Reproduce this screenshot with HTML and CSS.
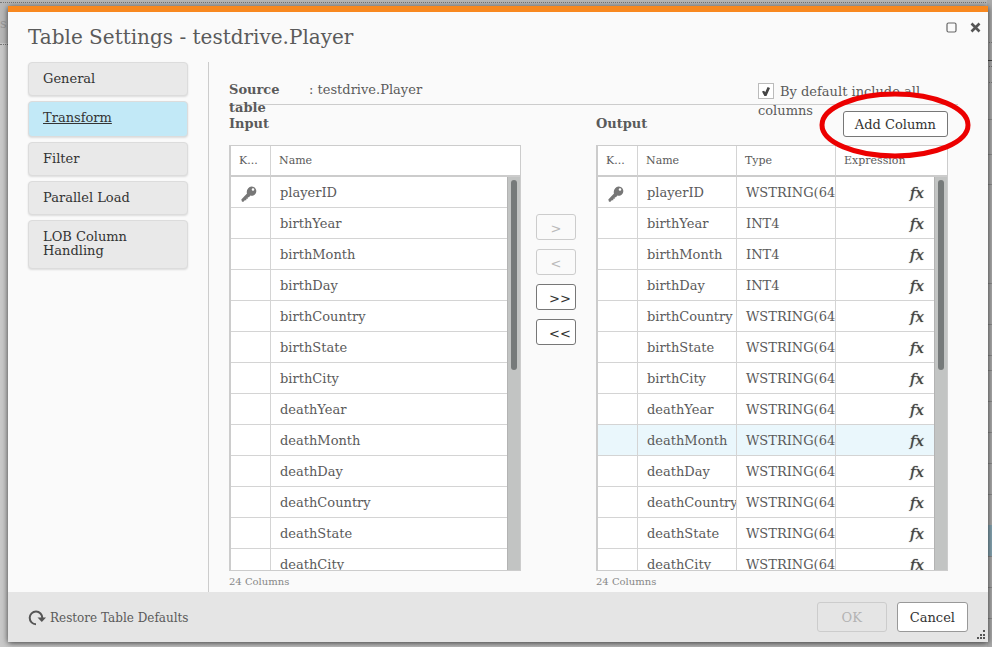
FILE: index.html
```
<!DOCTYPE html>
<html lang="en">
<head>
<meta charset="utf-8">
<title>Table Settings - testdrive.Player</title>
<link rel="stylesheet" href="styles.css">
</head>
<body>
<svg width="0" height="0" class="defs" aria-hidden="true">
  <symbol id="key" viewBox="0 0 16 16">
    <path fill="#777" fill-rule="evenodd" d="M10.500 0.500a4.700 4.700 0 0 1 3.400 8c-1.300 1.300-3 1.600-4.500 1.100L8 11.300H6.800v1.500H5.300V14.200H3.800l-1.300 1.500H1L0.300 13.500 6 7.500C5.400 6 5.800 4 7.200 2.300A4.600 4.600 0 0 1 10.500 0.500zM12 2.200a1.300 1.300 0 1 0 .01 2.600a1.300 1.300 0 0 0-.01-2.600z"/>
  </symbol>
</svg>
<div class="backdrop" aria-hidden="true">
  <span class="backdrop-text">s</span>
  <svg class="backdrop-edge" width="5" height="647">
    <g stroke="#777" stroke-dasharray="1 1"><path d="M0 42.500h5M0 66.500h5M0 82.500h5"/></g>
    <g stroke="#444"><path d="M0 60.500h5"/></g>
    <g stroke="#8c8c8c"><path d="M0 119.500h5M0 154.500h5M0 184.500h5M0 283.500h5M0 324.500h5M0 355.500h5M0 370.500h5M0 401.500h5M0 432.500h5M0 463.500h5M0 494.500h5M0 556.500h5M0 587.500h5M0 618.500h5"/></g>
    <path fill="#86a5b2" d="M0 525h5v31H0z"/>
  </svg>
</div>
<div class="dialog" role="dialog" aria-labelledby="title">
  <header class="dialog-head">
    <h1 id="title">Table Settings - testdrive.Player</h1>
    <div class="window-tools">
      <button type="button" aria-label="Maximize"><svg width="11" height="11"><rect x="1" y="1" width="9" height="9" rx="1.500" fill="none" stroke="#666" stroke-width="1.200"/></svg></button>
      <button type="button" aria-label="Close"><svg width="11" height="11"><path d="M1.500 1.500l8 8M9.500 1.500l-8 8" stroke="#555" stroke-width="2.600"/></svg></button>
    </div>
  </header>
  <div class="dialog-body">
    <nav class="tabs">
      <a href="#general">General</a>
      <a href="#transform" class="active">Transform</a>
      <a href="#filter">Filter</a>
      <a href="#parallel">Parallel Load</a>
      <a href="#lob">LOB Column Handling</a>
    </nav>
    <main class="content">
      <div class="source">
        <strong class="source-label">Source table</strong>
        <span class="source-value">: testdrive.Player</span>
        <label class="include" for="include"><input type="checkbox" id="include" checked>By default include all columns</label>
      </div>
      <div class="panes">
        <section class="pane pane-input">
          <div class="pane-head"><h2>Input</h2></div>
          <div class="grid">
            <table>
              <colgroup><col class="col-key"><col></colgroup>
              <thead><tr><th>K...</th><th>Name</th></tr></thead>
              <tbody id="input-rows"></tbody>
            </table>
            <div class="scrollbar"><div class="thumb"></div></div>
          </div>
          <p class="count">24 Columns</p>
        </section>
        <div class="movers">
          <button type="button" disabled>&gt;</button>
          <button type="button" disabled>&lt;</button>
          <button type="button">&gt;&gt;</button>
          <button type="button">&lt;&lt;</button>
        </div>
        <section class="pane pane-output">
          <div class="pane-head">
            <h2>Output</h2>
            <div class="add">
              <button type="button" class="button">Add Column</button>
              <svg class="ring" width="152" height="68" viewBox="0 0 152 68" aria-hidden="true"><ellipse cx="76" cy="34" rx="73" ry="31" fill="none" stroke="#ec0000" stroke-width="5"/></svg>
            </div>
          </div>
          <div class="grid">
            <table>
              <colgroup><col class="col-key"><col class="col-mid"><col class="col-mid"><col></colgroup>
              <thead><tr><th>K...</th><th>Name</th><th>Type</th><th>Expression</th></tr></thead>
              <tbody id="output-rows"></tbody>
            </table>
            <div class="scrollbar"><div class="thumb"></div></div>
          </div>
          <p class="count">24 Columns</p>
        </section>
      </div>
    </main>
  </div>
  <footer class="dialog-foot">
    <button type="button" class="restore">
      <svg width="18" height="16" viewBox="0 0 18 16" aria-hidden="true"><path d="M8 14.200A6.300 6.300 0 1 1 14.300 8" fill="none" stroke="#555" stroke-width="2"/><path d="M9.500 7.500h8.500l-4.200 4.500z" fill="#555"/></svg>
      Restore Table Defaults
    </button>
    <button type="button" class="button ok" disabled>OK</button>
    <button type="button" class="button cancel">Cancel</button>
    <svg class="grip" width="10" height="10" aria-hidden="true"><path fill="#555" d="M7 0h2v2H7zM4 4h2v2H4zM7 4h2v2H7zM1 7h2v2H1zM4 7h2v2H4zM7 7h2v2H7z"/></svg>
  </footer>
</div>
<script src="rows.js"></script>
</body>
</html>
```
FILE: rows.js
```
const text = "WSTRING(64)";
const columns = [
  ["playerID", text], ["birthYear", "INT4"], ["birthMonth", "INT4"], ["birthDay", "INT4"],
  ["birthCountry", text], ["birthState", text], ["birthCity", text], ["deathYear", text],
  ["deathMonth", text], ["deathDay", text], ["deathCountry", text], ["deathState", text],
  ["deathCity", text]
];
const key = '<svg class="key" width="16" height="16" role="img" aria-label="Key"><use href="#key"/></svg>';
const keyCell = (i) => `<td class="key-cell">${i === 0 ? key : ""}</td>`;

document.getElementById("input-rows").innerHTML = columns
  .map(([name], i) => `<tr>${keyCell(i)}<td>${name}</td></tr>`).join("");

document.getElementById("output-rows").innerHTML = columns
  .map(([name, type], i) => `<tr${name === "deathMonth" ? ' class="hover"' : ""}>${keyCell(i)}<td>${name}</td><td>${type}</td><td class="fx"><button type="button">fx</button></td></tr>`).join("");
```
FILE: styles.css
```
* { box-sizing: border-box; }

body {
  margin: 0;
  height: 100vh;
  padding: 6px 4px 5px 8px;
  overflow: hidden;
  background: linear-gradient(90deg, #c9c9c9, #b2b2b2);
  color: #5a5a5a;
  font: 13px/18px "DejaVu Serif", serif;
}

button { font: inherit; color: inherit; cursor: pointer; }
button:disabled { cursor: default; }
h1, h2, p { margin: 0; font-weight: normal; }

.defs { position: absolute; }

.backdrop {
  position: absolute;
  inset: 0;
  border-top: 43px solid #b8b8b8;
}
.backdrop::before {
  content: "";
  position: absolute;
  inset: -41px 0 auto;
  height: 41px;
  border: 1px dotted #777;
  border-width: 1px 0;
}
.backdrop-text { position: absolute; top: -28px; left: 0; color: #999; }
.backdrop-edge { position: absolute; top: -43px; right: 0; background: #ababab; }

.dialog {
  position: relative;
  display: flex;
  flex-direction: column;
  height: 100%;
  border-top: 6px solid #f8881f;
  background: #fafafa;
  box-shadow: 0 1px 6px rgba(0, 0, 0, 0.7);
}

.dialog-head {
  display: flex;
  justify-content: space-between;
  flex: 0 0 50px;
  padding: 10px 7px 0 20px;
}
h1 { font-size: 20px; line-height: 30px; }
.window-tools { display: flex; gap: 13px; height: 11px; }
.window-tools button { display: flex; padding: 0; border: 0; background: none; }

.dialog-body { display: flex; flex: 1; min-height: 0; }

.tabs {
  display: flex;
  flex-direction: column;
  gap: 5px;
  flex: 0 0 201px;
  padding: 0 20px;
  border-right: 1px solid #ccc;
}
.tabs a {
  padding: 9px 32px 9px 14px;
  border: 1px solid #dcdcdc;
  border-radius: 4px;
  background: #e9e9e9;
  box-shadow: 0 1px 2px rgba(0, 0, 0, 0.12);
  color: #333;
  line-height: 14px;
  text-decoration: none;
}
.tabs .active { padding-bottom: 11px; background: #c2e9f7; text-decoration: underline; }
.tabs a:last-child { padding-bottom: 10px; }

.content {
  display: flex;
  flex-direction: column;
  flex: 1;
  min-width: 0;
  padding: 0 30px 0 20px;
}

.source {
  display: flex;
  flex: 0 0 43px;
  height: 43px;
  padding-top: 19px;
  border-bottom: 1px solid #ccc;
}
.source-label { flex: 0 0 80px; padding-right: 20px; }
.source-value { flex: 1; }
.include { flex: 0 0 200px; padding-top: 1px; line-height: 19px; }
.include input {
  appearance: none;
  width: 16px;
  height: 16px;
  margin: 0 6px 0 0;
  border: 1px solid #bbb;
  background: #fff;
  vertical-align: -3px;
}
.include input:checked::before {
  content: "";
  display: block;
  width: 8px;
  height: 9px;
  margin: 3px;
  background: #444;
  clip-path: polygon(0 50%, 26% 42%, 40% 58%, 70% 0, 100% 10%, 56% 100%, 30% 100%);
}

.panes { display: flex; flex: 1; min-height: 0; padding-right: 10px; }
.pane { display: flex; flex-direction: column; min-width: 0; }
.pane-input { flex: 292 1 0; }
.pane-output { flex: 352 1 0; }
.pane-head { display: flex; justify-content: space-between; flex: 0 0 40px; padding-top: 6px; }
h2 { font-size: 13px; font-weight: bold; line-height: 26px; }

.add { position: relative; height: 26px; }
.ring { position: absolute; top: -20px; left: -24px; z-index: 2; pointer-events: none; }

.button {
  height: 30px;
  padding: 2px 12px 0;
  border: 1px solid #999;
  border-radius: 3px;
  background: #fff;
  color: #333;
}
.add .button { display: block; height: 26px; padding: 2px 11px 0; border-color: #777; }

.grid {
  position: relative;
  flex: 1;
  min-height: 0;
  overflow: hidden;
  border: 1px solid #ccc;
  border-left-width: 2px;
  background: #fff;
}
table { width: 100%; border-collapse: separate; border-spacing: 0; table-layout: fixed; }
.col-key { width: 40px; }
.col-mid { width: 99px; }
th, td {
  overflow: hidden;
  border-right: 1px solid #d4d4d4;
  text-align: left;
  white-space: nowrap;
}
th:last-child, td:last-child { border-right: 0; }
th {
  height: 31px;
  padding: 0 8px;
  border-bottom: 2px solid #ccc;
  font-size: 11px;
  font-weight: normal;
}
td { height: 31px; padding: 2px 0 0 9px; border-bottom: 1px solid #d4d4d4; }
.key-cell { padding: 0 0 0 10px; }
.key { display: block; margin-top: 4px; }
.hover td { background: #eaf7fc; }
.fx { padding-right: 23px; text-align: right; }
.fx button {
  padding: 0;
  border: 0;
  background: none;
  color: #444;
  font-size: 15px;
  font-style: italic;
  text-shadow: 0 0 1px #444;
}

.scrollbar {
  position: absolute;
  top: 31px;
  right: 0;
  bottom: 0;
  width: 13px;
  padding: 3px 3px 0;
  border-left: 1px solid #b3b3b3;
  background: #c2c4c3;
}
.thumb { height: 190px; border-radius: 3px; background: #767a7a; }

.count { flex: 0 0 21px; color: #888; font-size: 10px; line-height: 21px; }

.movers {
  display: flex;
  flex-direction: column;
  gap: 9px;
  flex: 0 0 75px;
  padding: 109px 20px 0 15px;
}
.movers button {
  height: 26px;
  padding: 3px 0 0 8px;
  border: 1px solid #777;
  border-radius: 3px;
  background: #fff;
  color: #333;
}
.movers button:disabled { padding-left: 0; border-color: #ccc; background: #fafafa; color: #bbb; }

.dialog-foot {
  position: relative;
  display: flex;
  align-items: center;
  gap: 10px;
  flex: 0 0 50px;
  padding: 0 20px;
  background: #e5e5e5;
}
.restore {
  display: flex;
  align-items: center;
  gap: 4px;
  margin-right: auto;
  padding: 2px 0 0;
  border: 0;
  background: none;
  font-size: 12px;
}
.ok { width: 70px; border-color: #ccc; background: #e5e5e5; color: #b3b3b3; }
.grip { position: absolute; right: 2px; bottom: 2px; }
```
